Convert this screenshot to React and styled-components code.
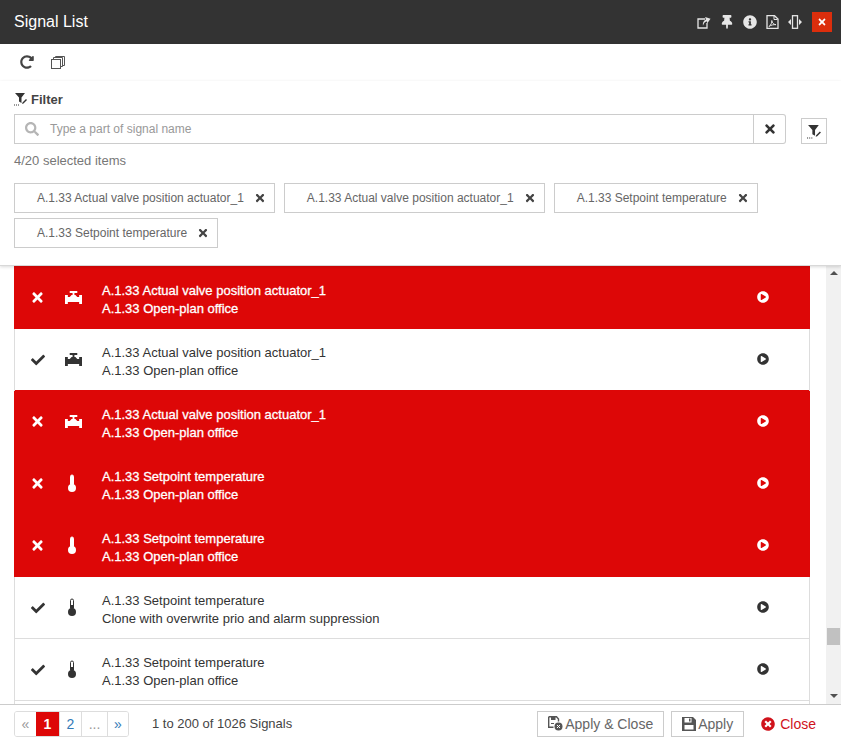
import React from "react";
import styled, { createGlobalStyle } from "styled-components";
import {
  FaTimes, FaCheck, FaPlayCircle, FaInfoCircle, FaThumbtack, FaSearch,
  FaRedoAlt, FaTimesCircle,
} from "react-icons/fa";

const Global = createGlobalStyle`
  html, body { margin: 0; padding: 0; background: #fff; }
  body { font-family: "Liberation Sans", Arial, sans-serif; color: #333; }
  * { box-sizing: border-box; }
`;

const Dialog = styled.div`
  width: 841px; height: 744px; display: flex; flex-direction: column; overflow: hidden; background: #fff;
`;
const Header = styled.header`
  height: 44px; flex: none; background: #333333; color: #fff; display: flex; align-items: center;
  padding: 0 9px 0 14px; justify-content: space-between;
`;
const Title = styled.h1`
  margin: 0; font-size: 16px; font-weight: 400; color: #fff;
`;
const HeadIcons = styled.div`
  display: flex; align-items: center; gap: 9px; color: #e6e6e6;
  svg { display: block; }
`;
const CloseBox = styled.div`
  width: 20px; height: 20px; background: #dc2e0c; color: #fff; display: flex; align-items: center;
  justify-content: center; font-size: 10px; margin-left: 1px;
`;
const Toolbar = styled.div`
  height: 37px; flex: none; display: flex; align-items: center; gap: 17px; padding: 0 0 1px 20px;
  color: #444; font-size: 14px; box-shadow: 0 1px 3px rgba(0,0,0,.12); position: relative;
`;
const FilterPanel = styled.section`
  height: 185px; flex: none; padding: 11px 14px 0; position: relative; z-index: 1; background: #fff;
  border-bottom: 1px solid #d8d8d8; box-shadow: 0 1px 3px rgba(0,0,0,.15);
`;
const FilterLabel = styled.div`
  display: flex; align-items: center; gap: 3px; font-size: 13px; font-weight: 700; color: #444; height: 14px;
`;
const SearchRow = styled.div`
  display: flex; align-items: center; margin-top: 8px; height: 30px;
`;
const SearchBox = styled.div`
  width: 741px; height: 30px; border: 1px solid #ccc; display: flex; align-items: center; padding-left: 10px;
  color: #b5b5b5; font-size: 14px;
`;
const Placeholder = styled.span`
  font-size: 12px; color: #999; margin-left: 11px;
`;
const ClearBtn = styled.div`
  width: 32px; height: 30px; border: 1px solid #ccc; border-left: none; border-radius: 0 3px 3px 0;
  display: flex; align-items: center; justify-content: center; font-size: 14px; color: #333;
`;
const FilterBtn = styled.div`
  width: 26px; height: 26px; border: 1px solid #ccc; margin: 4px 0 0 15px; display: flex;
  align-items: center; justify-content: center;
`;
const Count = styled.div`
  font-size: 13px; color: #777; margin-top: 10px; height: 14px; line-height: 14px;
`;
const Chips = styled.div`
  display: flex; flex-wrap: wrap; gap: 5px 9px; margin-top: 15px;
`;
const Chip = styled.div`
  height: 30px; border: 1px solid #ccc; display: flex; align-items: center; padding: 0 8px 0 22px;
  font-size: 12px; color: #666; gap: 10px;
  svg { font-size: 12px; color: #444; }
`;
const ListArea = styled.div`
  flex: 1; min-height: 0; display: flex; padding-left: 14px; position: relative;
`;
const List = styled.div`
  width: 796px; border-left: 1px solid #ddd; border-right: 1px solid #ddd;
`;
const Text = styled.div`
  margin: 4px 0 0 16px; width: 655px;
`;
const Row = styled.div`
  height: 62px; display: flex; align-items: center; font-size: 13px; line-height: 18px;
  background: ${p => (p.$active ? "#dd0707" : "#fff")};
  color: ${p => (p.$active ? "#fff" : "#333")};
  -webkit-text-stroke: ${p => (p.$active ? "0.3px #fff" : "0")};
  border-bottom: 1px solid ${p => (p.$active || p.$nextActive ? "#dd0707" : "#ddd")};
  margin: ${p => (p.$active ? "0 -1px" : "0")};
  &:first-child { height: 63px; }
  &:first-child ${Text} { margin-top: 6px; }
`;
const StateCell = styled.div`
  width: ${p => (p.$active ? "46px" : "45px")}; display: flex; justify-content: center;
  font-size: ${p => (p.$active ? "15px" : "14px")};
`;
const TypeCell = styled.div`
  width: 26px; display: flex; justify-content: center;
  svg.thermo { margin-right: 2px; }
`;
const Play = styled.div`
  font-size: 12px; display: flex; margin-top: -1px;
`;
const Scrollbar = styled.div`
  position: absolute; right: 0; top: 0; bottom: 0; width: 15px; background: #f1f1f1;
`;
const ScrollUp = styled.div`
  position: absolute; top: 5px; left: 4px; width: 0; height: 0;
  border-left: 4px solid transparent; border-right: 4px solid transparent; border-bottom: 4px solid #505050;
`;
const ScrollDown = styled.div`
  position: absolute; bottom: 6px; left: 4px; width: 0; height: 0;
  border-left: 4px solid transparent; border-right: 4px solid transparent; border-top: 4px solid #505050;
`;
const Thumb = styled.div`
  position: absolute; top: 362px; left: 1px; width: 13px; height: 17px; background: #c1c1c1;
`;
const Footer = styled.footer`
  height: 40px; flex: none; border-top: 1px solid #ccc; display: flex; align-items: center; padding: 0 13px 2px 14px;
`;
const Pager = styled.div`
  display: flex; height: 26px; border: 1px solid #ddd; border-radius: 3px; overflow: hidden;
`;
const Page = styled.div`
  min-width: ${p => p.$w}px; display: flex; align-items: center; justify-content: center; font-size: 14px;
  background: ${p => (p.$on ? "#dd0707" : "#fff")};
  color: ${p => (p.$on ? "#fff" : p.$muted ? "#999" : "#337ab7")};
  font-weight: ${p => (p.$on ? 700 : 400)};
  border-left: ${p => (p.$first || p.$on ? "none" : "1px solid #ddd")};
`;
const Range = styled.div`
  font-size: 13px; color: #444; margin-left: 23px; flex: 1;
`;
const Button = styled.div`
  height: 26px; border: 1px solid #ccc; display: flex; align-items: center; justify-content: center; gap: 2px;
  font-size: 14px; color: #666; padding: 0 10px; margin-right: 7px;
`;
const CloseLink = styled.div`
  display: flex; align-items: center; gap: 5px; font-size: 14px; color: #d0121b; margin-left: 10px; padding-right: 12px;
`;

const FilterIcon = ({ size = 14, color = "#333" }) => (
  <svg width={size} height={size} viewBox="0 0 14 14">
    <path d="M1 1h10L7.500 5.500V11L5 9.500V5.500z" fill={color} />
    <path d="M8.500 10.500l3.500-3.500 1 1-3.500 3.500-1.400.4z" fill={color} />
    <path d="M0 13h6" stroke={color} strokeWidth="1" strokeDasharray="1 1" />
  </svg>
);
const Valve = ({ color }) => (
  <svg width="17" height="15" viewBox="0 0 18 15" preserveAspectRatio="none">
    <path d="M5 1h8v2H10v2h1l2 2h2V5h3v9h-3v-2H3v2H0V5h3v2h2l2-2h1V3H5z" fill={color} />
  </svg>
);
const Thermo = ({ active }) => {
  const c = active ? "#fff" : "#333";
  return (
    <svg className="thermo" width="10" height="19" viewBox="0 0 10 19">
      <rect x="3.500" y="1" width="3" height="11" rx="1.500" fill="#fff" stroke={c} strokeWidth="1" />
      <circle cx="5" cy="14" r="4" fill={c} />
      <rect x="4" y="7" width="2" height="6" fill={c} />
    </svg>
  );
};
const Share = () => (
  <svg width="14" height="14" viewBox="0 0 14 14">
    <path d="M8 4H1v9h9V8" fill="none" stroke="#e6e6e6" strokeWidth="1.300" />
    <path d="M4.500 9.500C5 6.500 7 4.500 9.500 4.500V2L14 5.500 9.500 8.500V6.500C7.500 6.500 6 7.500 4.500 9.500z" fill="#e6e6e6" transform="rotate(-20 9 6)" />
  </svg>
);
const Pdf = () => (
  <svg width="13" height="14" viewBox="0 0 13 14">
    <path d="M1 .7h7.500L12 4v9.300H1z" fill="none" stroke="#e6e6e6" strokeWidth="1.300" />
    <path d="M8 1v3.500h3.500" fill="none" stroke="#e6e6e6" strokeWidth="1" />
    <path d="M3 11.500C5 10 6 7.500 5.800 5.500 6 8 8 9.500 10 9.700 7.500 9.500 5 10 3 11.500z" fill="none" stroke="#e6e6e6" strokeWidth="1" />
  </svg>
);
const Resize = () => (
  <svg width="14" height="14" viewBox="0 0 14 14">
    <rect x="4.500" y=".7" width="5" height="12.600" fill="none" stroke="#e6e6e6" strokeWidth="1.300" />
    <path d="M3 4v6L0 7zM11 4v6l3-3z" fill="#e6e6e6" />
  </svg>
);
const Clone = () => (
  <svg width="14" height="13" viewBox="0 0 14 13">
    <rect x=".5" y="3.500" width="9" height="9" fill="none" stroke="#555" />
    <path d="M2.500 3.500V1.500h9v9h-2M4.500 1.500V.5h9v9h-2" fill="none" stroke="#555" />
  </svg>
);
const Floppy = () => (
  <svg width="14" height="14" viewBox="0 0 14 14">
    <path d="M0 0h11l3 3v11H0z" fill="#555" />
    <rect x="2.500" y="1" width="7" height="4.500" fill="#fff" />
    <rect x="7" y="1.500" width="1.500" height="3" fill="#555" />
    <rect x="2.500" y="8" width="9" height="4.500" fill="#fff" />
  </svg>
);
const SaveClose = () => (
  <svg width="15" height="15" viewBox="0 0 15 15">
    <path d="M.7.7h7.800L10.500 3v2.500M5.500 11.300H.7V.7" fill="none" stroke="#555" strokeWidth="1.400" />
    <path d="M3 1h4.500v3H3z" fill="#555" />
    <path d="M3 7h3v1H3z" fill="#555" />
    <circle cx="10.500" cy="10.500" r="4" fill="#555" />
    <path d="M9 9l3 3M12 9l-3 3" stroke="#fff" strokeWidth="1" />
  </svg>
);

const rows = [
  { a: 1, kind: "v", l1: "A.1.33 Actual valve position actuator_1", l2: "A.1.33 Open-plan office" },
  { a: 0, kind: "v", l1: "A.1.33 Actual valve position actuator_1", l2: "A.1.33 Open-plan office" },
  { a: 1, kind: "v", l1: "A.1.33 Actual valve position actuator_1", l2: "A.1.33 Open-plan office" },
  { a: 1, kind: "t", l1: "A.1.33 Setpoint temperature", l2: "A.1.33 Open-plan office" },
  { a: 1, kind: "t", l1: "A.1.33 Setpoint temperature", l2: "A.1.33 Open-plan office" },
  { a: 0, kind: "t", l1: "A.1.33 Setpoint temperature", l2: "Clone with overwrite prio and alarm suppression" },
  { a: 0, kind: "t", l1: "A.1.33 Setpoint temperature", l2: "A.1.33 Open-plan office" },
];
const chips = [
  "A.1.33 Actual valve position actuator_1",
  "A.1.33 Actual valve position actuator_1",
  "A.1.33 Setpoint temperature",
  "A.1.33 Setpoint temperature",
];

export default function App() {
  return (
    <Dialog>
      <Global />
      <Header>
        <Title>Signal List</Title>
        <HeadIcons>
          <Share />
          <FaThumbtack size={14} />
          <FaInfoCircle size={14} />
          <Pdf />
          <Resize />
          <CloseBox><FaTimes /></CloseBox>
        </HeadIcons>
      </Header>
      <Toolbar>
        <FaRedoAlt />
        <Clone />
      </Toolbar>
      <FilterPanel>
        <FilterLabel><FilterIcon />Filter</FilterLabel>
        <SearchRow>
          <SearchBox><FaSearch /><Placeholder>Type a part of signal name</Placeholder></SearchBox>
          <ClearBtn><FaTimes /></ClearBtn>
          <FilterBtn><FilterIcon size={15} /></FilterBtn>
        </SearchRow>
        <Count>4/20 selected items</Count>
        <Chips>
          {chips.map((c, i) => <Chip key={i}>{c}<FaTimes /></Chip>)}
        </Chips>
      </FilterPanel>
      <ListArea>
        <List>
          {rows.map((r, i) => (
            <Row key={i} $active={!!r.a} $nextActive={!!(rows[i + 1] && rows[i + 1].a)}>
              <StateCell $active={!!r.a}>{r.a ? <FaTimes /> : <FaCheck />}</StateCell>
              <TypeCell>{r.kind === "v" ? <Valve color={r.a ? "#fff" : "#333"} /> : <Thermo active={!!r.a} />}</TypeCell>
              <Text><div>{r.l1}</div><div>{r.l2}</div></Text>
              <Play><FaPlayCircle /></Play>
            </Row>
          ))}
        </List>
        <Scrollbar><ScrollUp /><Thumb /><ScrollDown /></Scrollbar>
      </ListArea>
      <Footer>
        <Pager>
          <Page $w={21} $first $muted>«</Page>
          <Page $w={23} $on>1</Page>
          <Page $w={22}>2</Page>
          <Page $w={26} $muted>...</Page>
          <Page $w={21}>»</Page>
        </Pager>
        <Range>1 to 200 of 1026 Signals</Range>
        <Button><SaveClose />Apply &amp; Close</Button>
        <Button><Floppy />Apply</Button>
        <CloseLink><FaTimesCircle />Close</CloseLink>
      </Footer>
    </Dialog>
  );
}
